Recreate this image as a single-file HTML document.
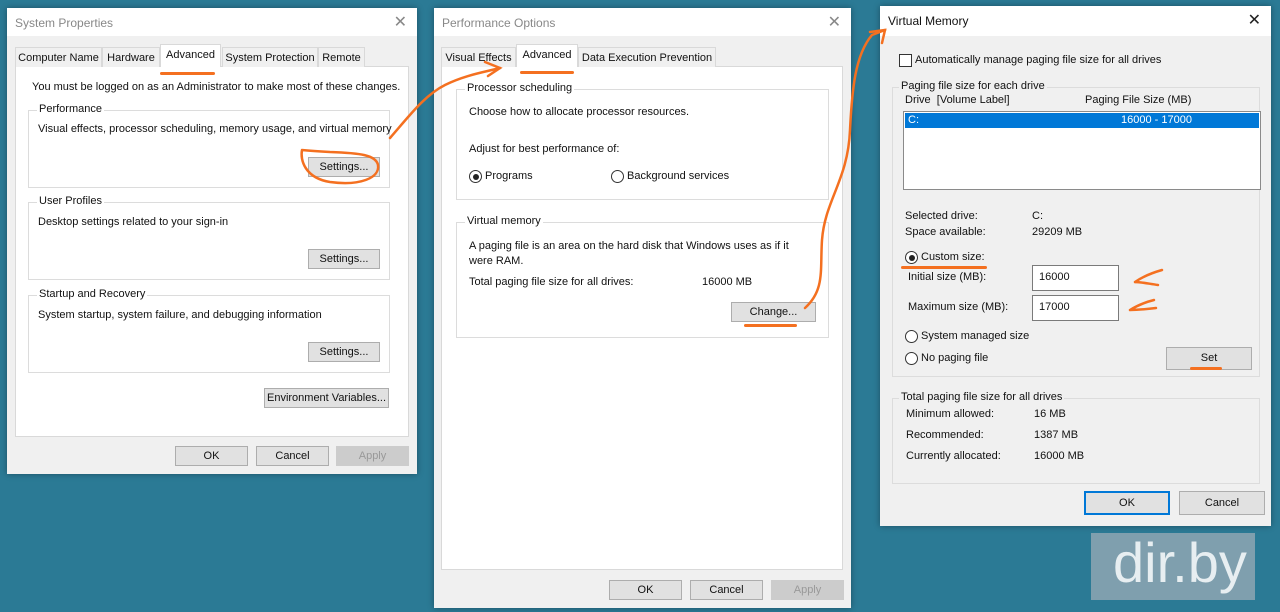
<!DOCTYPE html><html><head><meta charset="utf-8"><style>
*{margin:0;padding:0;box-sizing:border-box}
body{width:1280px;height:612px;background:#2b7a95;position:relative;overflow:hidden;font-family:"Liberation Sans",sans-serif;font-size:11px;color:#111}
div,span{position:absolute}
.win{background:#f0f0f0;box-shadow:0 0 6px rgba(0,0,0,.35)}
.title{left:0;top:0;right:0;height:28px;background:#fff}
.tt{left:8px;top:8px;font-size:12px;color:#888}
.x{right:10px;top:4px;font-size:16px;color:#888;font-weight:300}
.panel{background:#fff;border:1px solid #d9d9d9}
.tab{top:0;height:20px;border:1px solid #d9d9d9;border-bottom:none;background:#f0f0f0;padding-top:4px;text-align:center;white-space:nowrap;overflow:hidden}
.tab.sel{background:#fff;height:23px;top:-3px;padding-top:4px}
.grp{border:1px solid #dcdcdc}
.lg{top:-8px;left:8px;background:#fff;padding:0 2px;white-space:nowrap}
.btn{background:#e1e1e1;border:1px solid #adadad;text-align:center;line-height:18px;height:20px;white-space:nowrap}
.t{white-space:nowrap}
.rad{width:13px;height:13px;border:1px solid #333;border-radius:50%;background:#fff}
.rad.on::after{content:"";position:absolute;left:2.5px;top:2.5px;width:6px;height:6px;border-radius:50%;background:#222}
.ul{height:3px;background:#f47020;border-radius:2px}
.inp{background:#fff;border:1px solid #7a7a7a;height:26px;padding:5px 6px}
</style></head><body>

<!-- Window 1 -->
<div class="win" style="left:7px;top:8px;width:410px;height:466px">
 <div class="title"><span class="tt">System Properties</span><span class="x">✕</span></div>
 <div class="panel" style="left:8px;top:58px;width:394px;height:371px"></div>
 <div style="left:8px;top:39px;width:400px;height:20px">
  <span class="tab" style="left:0;width:87px">Computer Name</span>
  <span class="tab" style="left:87px;width:58px">Hardware</span>
  <span class="tab sel" style="left:145px;width:61px">Advanced</span>
  <span class="tab" style="left:207px;width:96px">System Protection</span>
  <span class="tab" style="left:303px;width:47px">Remote</span>
 </div>
 <span class="ul" style="left:153px;top:64px;width:55px"></span>
 <span class="t" style="left:25px;top:73px">You must be logged on as an Administrator to make most of these changes.</span>
 <div class="grp" style="left:21px;top:102px;width:362px;height:78px"><span class="lg">Performance</span></div>
 <span class="t" style="left:31px;top:115px">Visual effects, processor scheduling, memory usage, and virtual memory</span>
 <span class="btn" style="left:301px;top:149px;width:72px">Settings...</span>
 <div class="grp" style="left:21px;top:194px;width:362px;height:78px"><span class="lg">User Profiles</span></div>
 <span class="t" style="left:31px;top:208px">Desktop settings related to your sign-in</span>
 <span class="btn" style="left:301px;top:241px;width:72px">Settings...</span>
 <div class="grp" style="left:21px;top:287px;width:362px;height:78px"><span class="lg">Startup and Recovery</span></div>
 <span class="t" style="left:31px;top:301px">System startup, system failure, and debugging information</span>
 <span class="btn" style="left:301px;top:334px;width:72px">Settings...</span>
 <span class="btn" style="left:257px;top:380px;width:125px">Environment Variables...</span>
 <span class="btn" style="left:168px;top:438px;width:73px">OK</span>
 <span class="btn" style="left:249px;top:438px;width:73px">Cancel</span>
 <span class="btn" style="left:329px;top:438px;width:73px;color:#999;border-color:#ccc;background:#ccc">Apply</span>
</div>

<!-- Window 2 -->
<div class="win" style="left:434px;top:8px;width:417px;height:600px">
 <div class="title"><span class="tt">Performance Options</span><span class="x">✕</span></div>
 <div class="panel" style="left:7px;top:58px;width:402px;height:504px"></div>
 <div style="left:7px;top:39px;width:400px;height:20px">
  <span class="tab" style="left:0;width:75px">Visual Effects</span>
  <span class="tab sel" style="left:75px;width:62px">Advanced</span>
  <span class="tab" style="left:137px;width:138px">Data Execution Prevention</span>
 </div>
 <span class="ul" style="left:86px;top:63px;width:54px"></span>
 <div class="grp" style="left:22px;top:81px;width:373px;height:111px"><span class="lg">Processor scheduling</span></div>
 <span class="t" style="left:35px;top:98px">Choose how to allocate processor resources.</span>
 <span class="t" style="left:35px;top:135px">Adjust for best performance of:</span>
 <span class="rad on" style="left:35px;top:162px"></span><span class="t" style="left:51px;top:162px">Programs</span>
 <span class="rad" style="left:177px;top:162px"></span><span class="t" style="left:193px;top:162px">Background services</span>
 <div class="grp" style="left:22px;top:214px;width:373px;height:116px"><span class="lg">Virtual memory</span></div>
 <span class="t" style="left:35px;top:231px;line-height:15px">A paging file is an area on the hard disk that Windows uses as if it<br>were RAM.</span>
 <span class="t" style="left:35px;top:268px">Total paging file size for all drives:</span>
 <span class="t" style="left:268px;top:268px">16000 MB</span>
 <span class="btn" style="left:297px;top:294px;width:85px">Change...</span>
 <span class="ul" style="left:310px;top:316px;width:53px"></span>
 <span class="btn" style="left:175px;top:572px;width:73px">OK</span>
 <span class="btn" style="left:256px;top:572px;width:73px">Cancel</span>
 <span class="btn" style="left:337px;top:572px;width:73px;color:#999;border-color:#ccc;background:#ccc">Apply</span>
</div>

<!-- Window 3 -->
<div class="win" style="left:880px;top:6px;width:391px;height:520px">
 <div class="title" style="height:30px"><span class="tt" style="color:#111">Virtual Memory</span><span class="x" style="color:#222">✕</span></div>
 <span style="left:19px;top:48px;width:13px;height:13px;border:1px solid #333;background:#fff"></span>
 <span class="t" style="left:35px;top:48px">Automatically manage paging file size for all drives</span>
 <div class="grp" style="left:12px;top:81px;width:368px;height:290px;border-color:#dcdcdc"><span class="lg" style="background:#f0f0f0;left:6px">Paging file size for each drive</span></div>
 <span class="t" style="left:25px;top:88px">Drive&nbsp; [Volume Label]</span>
 <span class="t" style="left:205px;top:88px">Paging File Size (MB)</span>
 <div style="left:23px;top:105px;width:358px;height:79px;background:#fff;border:1px solid #8a8a8a">
  <span style="left:1px;top:1px;right:1px;height:15px;background:#0078d7;color:#fff"><span style="left:3px;top:1px">C:</span><span style="left:216px;top:1px">16000 - 17000</span></span>
 </div>
 <span class="t" style="left:25px;top:204px">Selected drive:</span><span class="t" style="left:152px;top:204px">C:</span>
 <span class="t" style="left:25px;top:220px">Space available:</span><span class="t" style="left:152px;top:220px">29209 MB</span>
 <span class="rad on" style="left:25px;top:245px"></span><span class="t" style="left:41px;top:245px">Custom size:</span>
 <span class="ul" style="left:21px;top:260px;width:86px"></span>
 <span class="t" style="left:28px;top:265px">Initial size (MB):</span>
 <span class="inp" style="left:152px;top:259px;width:87px">16000</span>
 <span class="t" style="left:28px;top:295px">Maximum size (MB):</span>
 <span class="inp" style="left:152px;top:289px;width:87px">17000</span>
 <span class="rad" style="left:25px;top:324px"></span><span class="t" style="left:41px;top:324px">System managed size</span>
 <span class="rad" style="left:25px;top:346px"></span><span class="t" style="left:41px;top:346px">No paging file</span>
 <span class="btn" style="left:286px;top:341px;width:86px;height:23px;line-height:21px">Set</span>
 <span class="ul" style="left:310px;top:361px;width:32px"></span>
 <div class="grp" style="left:12px;top:392px;width:368px;height:86px"><span class="lg" style="background:#f0f0f0;left:6px">Total paging file size for all drives</span></div>
 <span class="t" style="left:26px;top:402px">Minimum allowed:</span><span class="t" style="left:154px;top:402px">16 MB</span>
 <span class="t" style="left:26px;top:423px">Recommended:</span><span class="t" style="left:154px;top:423px">1387 MB</span>
 <span class="t" style="left:26px;top:444px">Currently allocated:</span><span class="t" style="left:154px;top:444px">16000 MB</span>
 <span class="btn" style="left:204px;top:485px;width:86px;height:24px;line-height:21px;border:2px solid #0078d7">OK</span>
 <span class="btn" style="left:299px;top:485px;width:86px;height:24px;line-height:22px">Cancel</span>
</div>

<!-- logo -->
<div style="left:1091px;top:533px;width:164px;height:67px;background:#7f9fae;overflow:hidden"><span style="left:22px;top:-3px;font-size:56px;color:#e7eef1">dir.by</span></div>

<!-- annotations -->
<svg style="position:absolute;left:0;top:0" width="1280" height="612" fill="none" stroke="#f47020" stroke-width="2.5" stroke-linecap="round">
 <path d="M302 150 C300 160 305 178 330 182 C360 186 380 178 378 165 C376 155 360 153 330 152 C312 151 302 150 302 150"/>
 <path d="M390 138 C410 115 425 95 445 85 C465 75 485 72 500 68"/>
 <path d="M485 62 L500 68 L488 76"/>
 <path d="M805 308 C825 290 820 270 822 240 C825 200 848 180 850 130 C852 90 855 55 872 35 L885 30"/>
 <path d="M870 32 L885 30 L882 43"/>
 <path d="M1135 282 C1145 275 1155 272 1162 270 M1135 282 C1142 282 1150 284 1158 285"/>
 <path d="M1130 310 C1138 305 1146 302 1154 300 M1130 310 C1140 310 1148 309 1156 308"/>
</svg>
</body></html>
